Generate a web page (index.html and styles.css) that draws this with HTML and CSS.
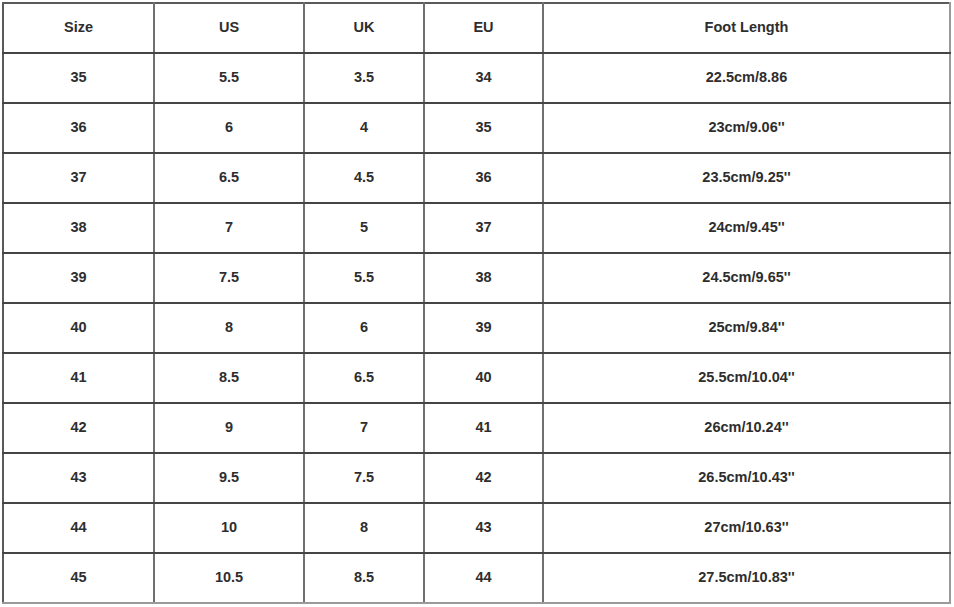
FILE: index.html
```html
<!DOCTYPE html>
<html>
<head>
<meta charset="utf-8">
<link rel="stylesheet" href="styles.css">
</head>
<body>
<table class="size-table">
  <colgroup>
    <col class="c1"><col class="c2"><col class="c3"><col class="c4"><col class="c5">
  </colgroup>
  <thead>
    <tr><th>Size</th><th>US</th><th>UK</th><th>EU</th><th>Foot Length</th></tr>
  </thead>
  <tbody>
    <tr><td>35</td><td>5.5</td><td>3.5</td><td>34</td><td>22.5cm/8.86</td></tr>
    <tr><td>36</td><td>6</td><td>4</td><td>35</td><td>23cm/9.06''</td></tr>
    <tr><td>37</td><td>6.5</td><td>4.5</td><td>36</td><td>23.5cm/9.25''</td></tr>
    <tr><td>38</td><td>7</td><td>5</td><td>37</td><td>24cm/9.45''</td></tr>
    <tr><td>39</td><td>7.5</td><td>5.5</td><td>38</td><td>24.5cm/9.65''</td></tr>
    <tr><td>40</td><td>8</td><td>6</td><td>39</td><td>25cm/9.84''</td></tr>
    <tr><td>41</td><td>8.5</td><td>6.5</td><td>40</td><td>25.5cm/10.04''</td></tr>
    <tr><td>42</td><td>9</td><td>7</td><td>41</td><td>26cm/10.24''</td></tr>
    <tr><td>43</td><td>9.5</td><td>7.5</td><td>42</td><td>26.5cm/10.43''</td></tr>
    <tr><td>44</td><td>10</td><td>8</td><td>43</td><td>27cm/10.63''</td></tr>
    <tr><td>45</td><td>10.5</td><td>8.5</td><td>44</td><td>27.5cm/10.83''</td></tr>
  </tbody>
</table>
</body>
</html>
```
FILE: styles.css
```css
html, body {
  margin: 0;
  padding: 0;
  background: #ffffff;
}
body {
  padding: 2px 0 0 2px;
}
.size-table {
  border-collapse: collapse;
  table-layout: fixed;
  width: 949px;
  font-family: "Liberation Sans", Arial, sans-serif;
  font-size: 14.5px;
  font-weight: bold;
  color: #2e2e2e;
}
.c1 { width: 151px; }
.c2 { width: 150px; }
.c3 { width: 120px; }
.c4 { width: 119px; }
.c5 { width: 407px; }
.size-table tr {
  height: 50px;
}
.size-table th,
.size-table td {
  padding: 0 0 2px 0;
  text-align: center;
  vertical-align: middle;
  font-weight: bold;
  border-top: 2px solid #454545;
  border-bottom: 2px solid #454545;
  border-left: 2px solid #707070;
  border-right: 2px solid #707070;
}
.size-table th:first-child,
.size-table td:first-child {
  border-left-color: #5a5a5a;
}
.size-table th:last-child,
.size-table td:last-child {
  border-right-color: #9a9a9a;
}
.size-table th {
  border-top-color: #5a5a5a;
}
.size-table tbody tr:last-child td {
  border-bottom-color: #9a9a9a;
}
```
